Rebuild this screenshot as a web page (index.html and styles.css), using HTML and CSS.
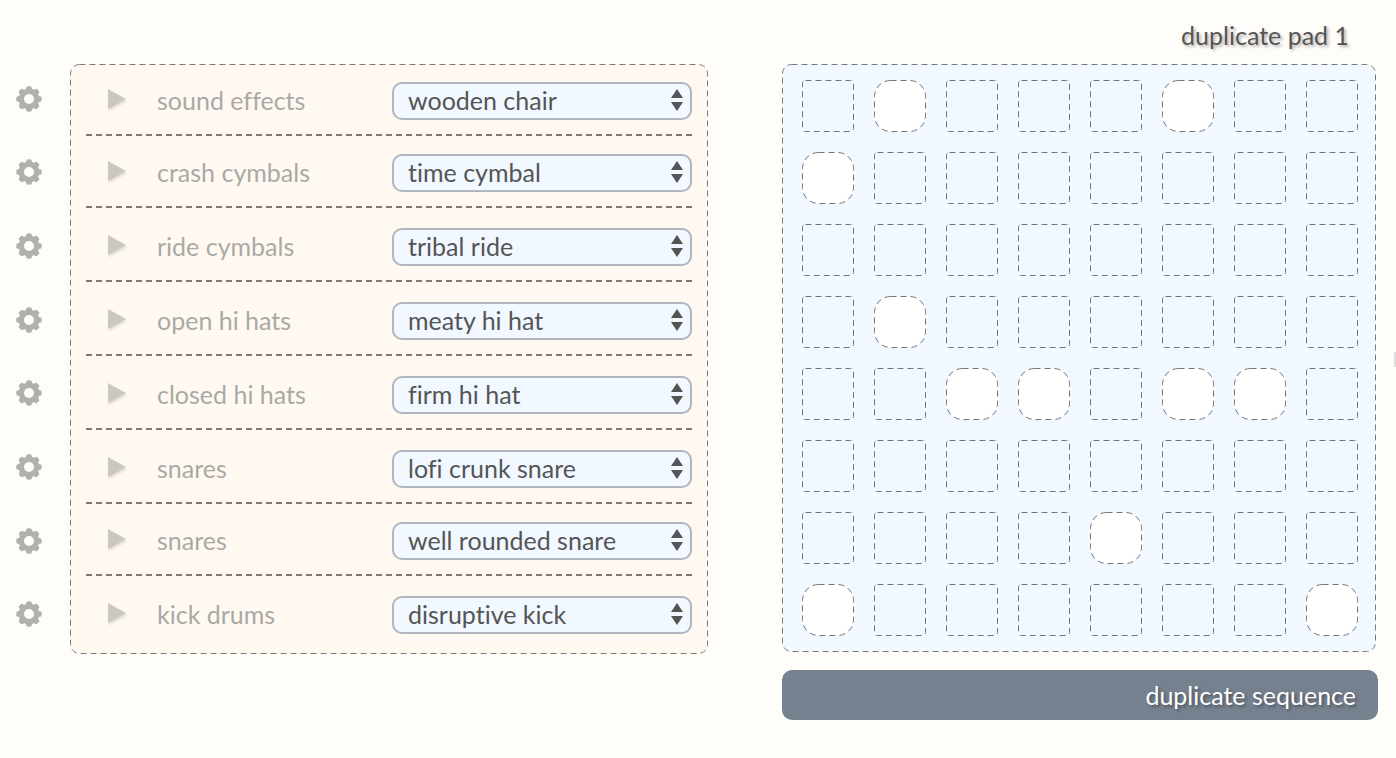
FILE: index.html
```
<!DOCTYPE html>
<html lang="en">
<head>
<meta charset="utf-8">
<meta name="viewport" content="width=device-width, initial-scale=1">
<title>Drum sequencer</title>
<link rel="stylesheet" href="styles.css">
</head>
<body>
<svg class="defs" aria-hidden="true">
  <symbol id="gear" viewBox="0 0 26 26">
    <circle cx="13" cy="13" r="7.7" fill="none" stroke="#b1b0ac" stroke-width="5.4"/>
    <g stroke="#b1b0ac" stroke-width="5.6" stroke-linejoin="round">
      <path id="tooth" stroke="none" d="M9.700 4 10.400 1.300Q10.600.5 11.400.4Q13 .1 14.600.4Q15.400.5 15.600 1.300L16.300 4Z"/>
      <use href="#tooth" stroke="none" transform="rotate(45 13 13)"/>
      <use href="#tooth" stroke="none" transform="rotate(90 13 13)"/>
      <use href="#tooth" stroke="none" transform="rotate(135 13 13)"/>
      <use href="#tooth" stroke="none" transform="rotate(180 13 13)"/>
      <use href="#tooth" stroke="none" transform="rotate(225 13 13)"/>
      <use href="#tooth" stroke="none" transform="rotate(270 13 13)"/>
      <use href="#tooth" stroke="none" transform="rotate(315 13 13)"/>
    </g>
  </symbol>
  <symbol id="play" viewBox="0 0 18 20"><path d="M0 0 18 10 0 20Z"/></symbol>
  <symbol id="arrows" viewBox="0 0 12 22"><path d="M0 9 6 0 12 9ZM0 13H12L6 22Z"/></symbol>
</svg>
<main class="page">
  <div class="gears" id="gears"></div>
  <section class="panel instruments">
    <svg class="frame" aria-hidden="true"><rect x="0.5" y="0.5" rx="9"/></svg>
    <div class="rows" id="rows"></div>
  </section>
  <section class="sequence">
    <button class="duplicate-pad" type="button">duplicate pad 1</button>
    <div class="panel pad">
      <svg class="frame" aria-hidden="true"><rect x="0.5" y="0.5" rx="9"/></svg>
      <div class="cells" id="cells"></div>
    </div>
    <button class="duplicate-sequence" type="button">duplicate sequence</button>
  </section>
  <span class="edge-handle"></span>
</main>
<script src="app.js"></script>
</body>
</html>
```
FILE: styles.css
```
* { box-sizing: border-box; }

body {
  margin: 0;
  background: #fffdf9;
  color: #555;
  font-family: Lato, "Open Sans", sans-serif;
  font-size: 25px;
  line-height: 30px;
  font-variant-ligatures: no-common-ligatures;
  overflow-x: hidden;
}

button, select { font: inherit; color: inherit; font-variant-ligatures: inherit; }
button { border: 0; padding: 0; background: none; cursor: pointer; }
svg { display: block; }
.defs { position: absolute; width: 0; height: 0; }

.page {
  position: relative;
  display: grid;
  grid-template-columns: 58px minmax(560px, 1fr) 596px;
  align-items: start;
  padding: 0 18px 38px 0;
}

.gears {
  display: grid;
  grid-auto-rows: 1fr;
  align-self: stretch;
  margin: 62px 0 69px;
}
.gear { display: grid; place-items: center; }
.gear svg { width: 26px; height: 26px; fill: #b1b0ac; }

.panel { position: relative; border-radius: 10px; }
.frame {
  position: absolute;
  inset: 0;
  width: 100%;
  height: 100%;
  pointer-events: none;
}
.frame rect {
  width: calc(100% - 1px);
  height: calc(100% - 1px);
  fill: none;
  stroke: #7c7a78;
  stroke-dasharray: 6 4;
}

.instruments {
  margin: 64px 74px 0 12px;
  padding: 0 16px 4px;
  background: #fff9f2;
}
.rows {
  display: grid;
  grid-template-rows: 72px 72px repeat(4, 74px) 72px 74px;
}
.row {
  display: grid;
  grid-template-columns: 50px 1fr 300px;
  align-items: end;
  padding: 0 0 16px 21px;
  background: repeating-linear-gradient(90deg, #7c7975 0 6px, transparent 6px 10px) bottom / 100% 2px no-repeat;
}
.row:last-child { background: none; }
.play { justify-self: start; height: 38px; padding: 0 0 4px 1px; }
.play svg {
  width: 18px;
  height: 20px;
  fill: #cac8c2;
  filter: drop-shadow(1px 2px 1px rgba(0, 0, 0, 0.12));
}
.name { height: 38px; line-height: 36px; color: #aaa9a5; }

.picker { position: relative; }
.picker select {
  display: block;
  width: 100%;
  height: 38px;
  padding: 0 32px 2px 14px;
  border: 2px solid #b0b6bb;
  border-radius: 10px;
  background: #f1f8ff;
  appearance: none;
}
.picker svg {
  position: absolute;
  top: 7px;
  right: 9px;
  width: 12px;
  height: 22px;
  fill: #555;
  pointer-events: none;
}

.sequence { display: flex; flex-direction: column; }
.duplicate-pad {
  align-self: flex-end;
  height: 64px;
  padding: 6px 29px 0;
  text-shadow: 2px 2px 3px rgba(0, 0, 0, 0.3);
}
.pad {
  margin-right: 2px;
  padding: 16px 18px 16px 20px;
  background: #f1f8ff;
}
.cells { display: grid; grid-template-columns: repeat(8, 52px); gap: 20px; }
.cell { height: 52px; }
.cell svg { width: 52px; height: 52px; }
.cell rect {
  width: 51px;
  height: 51px;
  rx: 3px;
  fill: none;
  stroke: #747476;
  stroke-dasharray: 6 4;
}
.cell.on rect { rx: 16px; fill: #fff; }

.duplicate-sequence {
  height: 50px;
  margin-top: 18px;
  padding-right: 22px;
  border-radius: 10px;
  background: #76818f;
  color: #fff;
  text-align: right;
  text-shadow: 2px 2px 3px rgba(0, 0, 0, 0.35);
}

.edge-handle {
  position: absolute;
  top: 352px;
  right: 0;
  width: 2px;
  height: 15px;
  background: #dedddb;
}
```
FILE: app.js
```
const tracks = [
  ["sound effects", "wooden chair", [1, 5]],
  ["crash cymbals", "time cymbal", [0]],
  ["ride cymbals", "tribal ride", []],
  ["open hi hats", "meaty hi hat", [1]],
  ["closed hi hats", "firm hi hat", [2, 3, 5, 6]],
  ["snares", "lofi crunk snare", []],
  ["snares", "well rounded snare", [4]],
  ["kick drums", "disruptive kick", [0, 7]]
];

const icon = (id) => `<svg aria-hidden="true"><use href="#${id}"/></svg>`;

document.getElementById("gears").innerHTML = tracks
  .map(([name]) => `<button class="gear" type="button" aria-label="${name} settings">${icon("gear")}</button>`)
  .join("");

document.getElementById("rows").innerHTML = tracks
  .map(([name, sound], i) => `<div class="row">
    <button class="play" type="button" aria-label="play ${name}">${icon("play")}</button>
    <label class="name" for="sound-${i}">${name}</label>
    <div class="picker"><select id="sound-${i}"><option>${sound}</option></select>${icon("arrows")}</div>
  </div>`)
  .join("");

document.getElementById("cells").innerHTML = tracks
  .map(([name, , beats]) => Array.from({ length: 8 }, (_, beat) => {
    const on = beats.includes(beat);
    return `<button class="cell${on ? " on" : ""}" type="button" aria-pressed="${on}" aria-label="${name} beat ${beat + 1}"><svg aria-hidden="true"><rect x="0.5" y="0.5"/></svg></button>`;
  }).join(""))
  .join("");
```
